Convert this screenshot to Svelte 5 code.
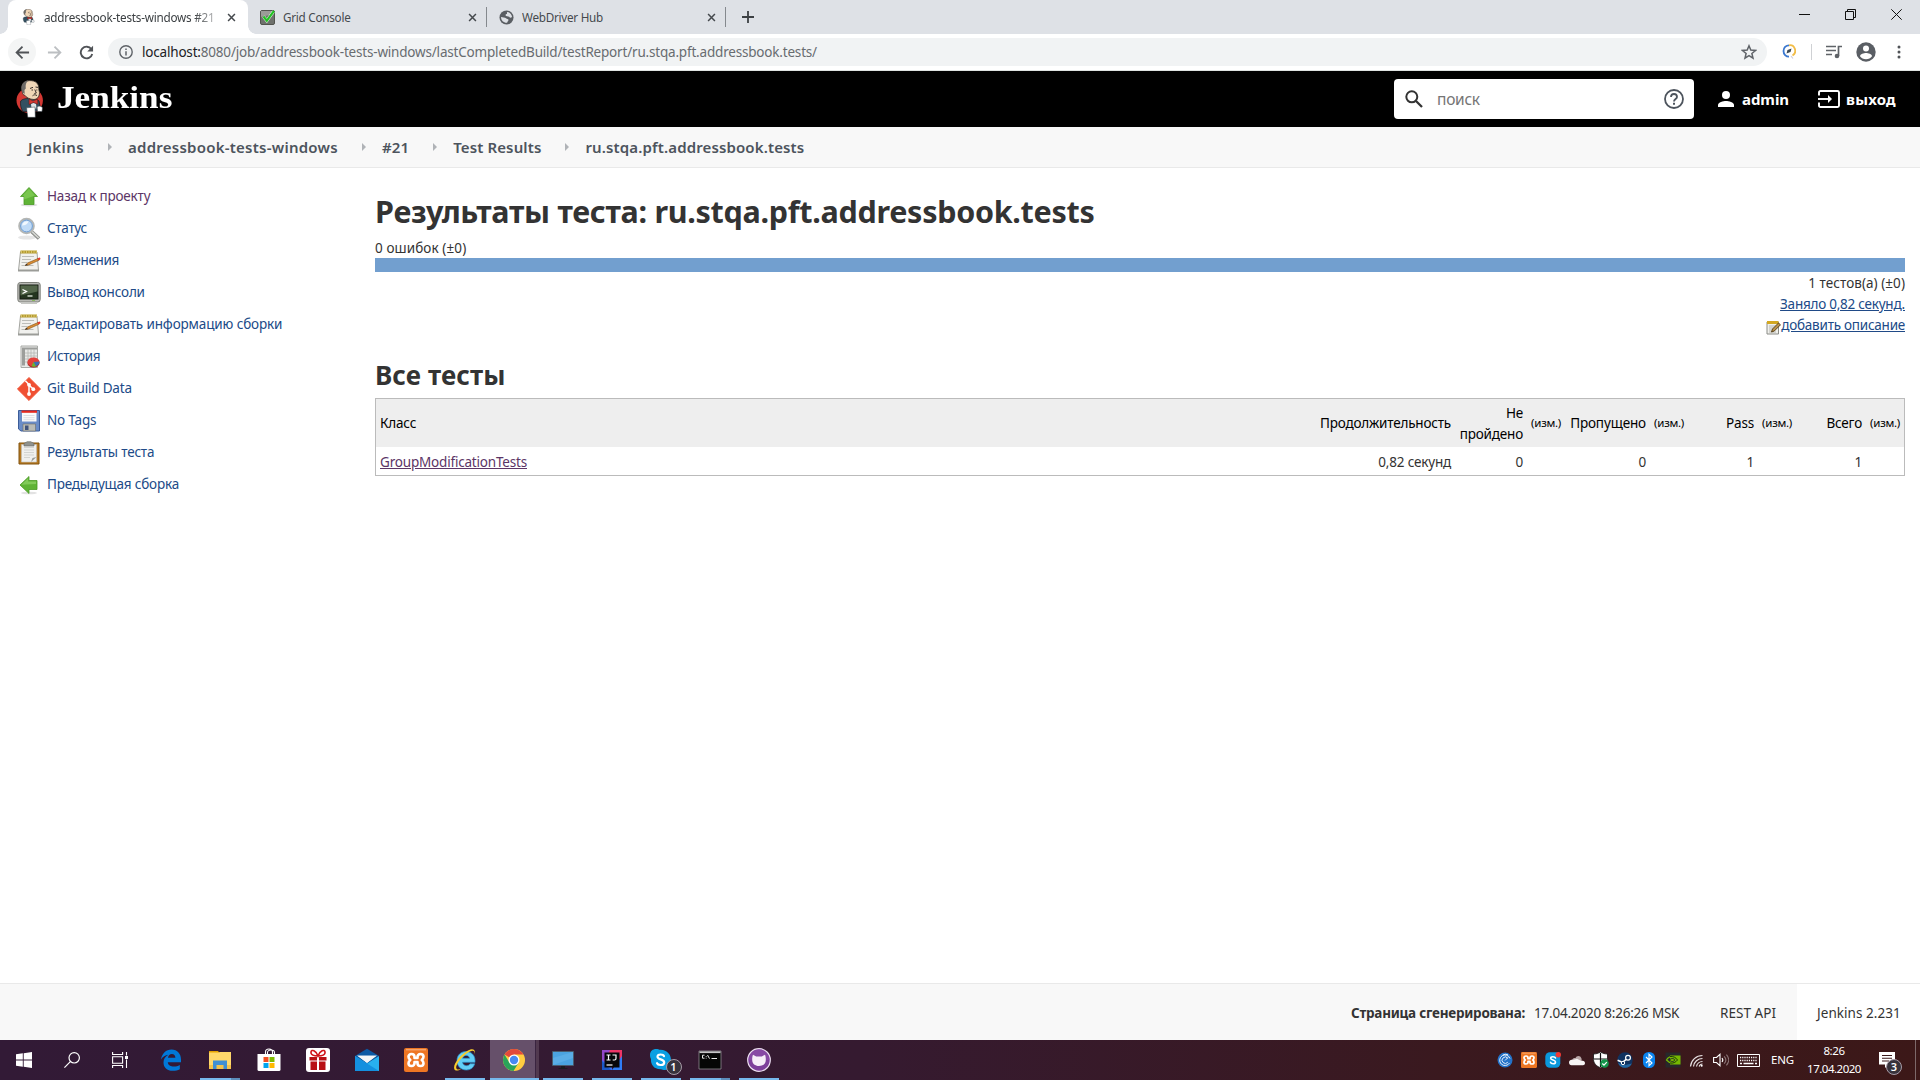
<script>
  const tasks = [
    { icon: 'up', label: 'Назад к проекту', visited: true },
    { icon: 'search', label: 'Статус', ls: 't2' },
    { icon: 'notepad', label: 'Изменения', ls: 't2' },
    { icon: 'terminal', label: 'Вывод консоли' },
    { icon: 'notepad', label: 'Редактировать информацию сборки', ls: 't0' },
    { icon: 'graph', label: 'История', ls: 't2' },
    { icon: 'git', label: 'Git Build Data' },
    { icon: 'floppy', label: 'No Tags' },
    { icon: 'clipboard', label: 'Результаты теста' },
    { icon: 'prev', label: 'Предыдущая сборка' }
  ];
  const crumbs = ['Jenkins', 'addressbook-tests-windows', '#21', 'Test Results', 'ru.stqa.pft.addressbook.tests'];
  const apps = [
    { id: 'edge' },
    { id: 'folder', open: true, multi: true },
    { id: 'store' },
    { id: 'gift' },
    { id: 'mail' },
    { id: 'xampp' },
    { id: 'ie', open: true },
    { id: 'chrome', active: true },
    { id: 'monitor', open: true },
    { id: 'idea', open: true },
    { id: 'skype', open: true },
    { id: 'cmd', open: true, multi: true },
    { id: 'github', open: true }
  ];
  const tray = ['citrix', 'xampp', 'skype', 'cloud', 'shield', 'steam', 'bluetooth', 'nvidia', 'wifi', 'volume'];
</script>

{#snippet butler()}
  <path d="M4.700 21c1.500-2 5-2.500 8-2.500 4 0 9 .5 10.300 2.500l1.500 8-5 2.500H7c-2-2.500-3-7-2.300-10.500z" fill="#335061" stroke="#141c22" stroke-width=".7" />
  <path d="M6.500 12.500C4 6 7 .8 13.500.6c6.500-.2 9.500 3.400 9.300 8 0 2 1 3.400.6 5.400-.3 3-2.400 5.500-5.400 5.500-4 0-8-2-9.500-4.500-1.200 0-2-1-2-2.500z" fill="#f0d6b7" stroke="#2b2522" stroke-width=".8" />
  <path d="M6.500 12.500C3.800 6 7 .8 12.500.6 10 2.500 9.300 5 9.800 8.500L8.500 10l.2 4z" fill="#6d6a67" />
  <path d="M14 8.500l3-1.200M19.500 7l2.500.4M15.500 10h1.500M20.300 10h1M16.500 15.800c1.500-1.300 3-1.300 4.500-.2M18.800 9.500l1.500 3.500-2 .5" stroke="#3a302b" stroke-width="1" fill="none" />
  <path d="M13 19l4 2 4.500-2 .3 5.200-4.300-1.600-4.500 1.800z" fill="#d33833" stroke="#6d120e" stroke-width=".5" />
  <path d="M15 24l2.500-1 2.500 1 .5 4.500h-5z" fill="#dfe5e8" />
  <path d="M10.500 27.800l8.500-.8.3 10.300h-7.500z" fill="#fff" stroke="#39424a" stroke-width=".5" />
  <path d="M21 27c2-1.500 4-1 5.500.8L26 31.500h-4.500z" fill="#fff" stroke="#39424a" stroke-width=".6" />
{/snippet}

{#snippet closeX()}
  <svg class="x" viewBox="0 0 10 10"><path d="M1.200 1.200l7.600 7.600M8.800 1.200L1.200 8.800" stroke="#45494d" stroke-width="1.700" /></svg>
{/snippet}

{#snippet taskIcon(name)}
  <svg class="ticon" viewBox="0 0 24 24">
    {#if name === 'up'}
      <ellipse cx="12" cy="20" rx="8.500" ry="1.500" fill="#ddd" />
      <path d="M12 2.500L20.500 11.500H17V19.500H7V11.500H3.500z" fill="#5fb336" stroke="#4a9a24" stroke-width=".8" />
      <path d="M12 3.800L18 10.500l-11 4V10.700H5.600z" fill="#8bd25f" opacity=".6" />
    {:else if name === 'prev'}
      <ellipse cx="12" cy="20" rx="8" ry="1.300" fill="#e2e2e2" />
      <path d="M3 12L12 3.500V7.500H20V16.500H12V20.500z" fill="#5fb336" stroke="#4a9a24" stroke-width=".8" />
      <path d="M4.300 11.800L11.200 5.200V8.500H19V11z" fill="#9ad873" opacity=".6" />
    {:else if name === 'search'}
      <ellipse cx="10" cy="20.500" rx="9" ry="2" fill="#e6e6e6" />
      <path d="M14.500 14.500l7.500 7" stroke="#8b8d8a" stroke-width="3.600" />
      <path d="M15 14.700l6.700 6.300" stroke="#d5d7d3" stroke-width="1.600" />
      <circle cx="9.500" cy="9" r="7.300" fill="#c0dbf7" stroke="#b4b6b4" stroke-width="2" />
      <circle cx="9.500" cy="9" r="5.900" fill="none" stroke="#6d9bd0" stroke-width="1" />
      <path d="M5 8.500c.5-3 3-4.500 6-4.200 1 1-2 4.500-6 4.200z" fill="#f2f8fe" />
    {:else if name === 'notepad'}
      <path d="M1.500 21.500L3.500 3H20l1.500 18.500z" fill="#f1f1ee" stroke="#a3a49f" stroke-width="1" />
      <path d="M1 20.500h21v2H1z" fill="#9b9c98" />
      <path d="M3.500 1.500h16.500v3H3.300z" fill="#b59b2f" />
      <path d="M4.500 1v3M7 1v3M9.500 1v3M12 1v3M14.500 1v3M17 1v3M19.300 1v3" stroke="#e5d588" stroke-width=".7" />
      <path d="M5 7.500h12M5 10.500h9M4.500 13.500h6M4.500 16.500h12" stroke="#bcbdb9" stroke-width="1" />
      <path d="M8 16.500l3-2.700L21 9.500l.8 1.800-10.300 4.700z" fill="#dc8f35" stroke="#7c4d16" stroke-width=".6" />
      <path d="M8 16.500l1.700-1.700 1.100 1.400z" fill="#333" />
      <path d="M20.500 9.500l1.800-.9c1.200 0 1.500 1.500.6 2.100l-1.500.8z" fill="#e23b2e" />
    {:else if name === 'terminal'}
      <rect x=".8" y="1.500" width="22.400" height="19.500" rx="2.500" fill="#b9bab5" stroke="#7f817b" />
      <path d="M4 21h16v2H4z" fill="#c6c7c3" />
      <rect x="3" y="4" width="18" height="14" fill="#24351f" stroke="#151b12" />
      <path d="M3.500 4.500h17v6l-17 4z" fill="#53664a" />
      <path d="M5.500 8.500l4 2-4 2" stroke="#fff" stroke-width="1.300" fill="none" />
      <path d="M10.500 15h5" stroke="#e9f0e5" stroke-width="1.300" />
      <path d="M15 19.500h3" stroke="#8ab95f" />
    {:else if name === 'graph'}
      <path d="M4 1h16.500v21.500H4z" fill="#e8e9e7" stroke="#a8aaa6" />
      <path d="M5 2.500h3v18H5zM8 2.500h12v2H8z" fill="#9c9e9b" />
      <path d="M11 4v17M14 4v17M17 4v17M8 8h12M8 11h12M8 14h12M8 17h12" stroke="#b4b6b3" stroke-width=".8" />
      <ellipse cx="16.500" cy="18" rx="6" ry="4.600" fill="#a31d1d" />
      <ellipse cx="16.500" cy="17" rx="6" ry="4.500" fill="#e3413b" />
      <path d="M16.500 17l6-.5c.2 2.500-1.500 4-4 4.800z" fill="#3c6fb3" />
      <path d="M16.500 17l2.500 4.400c-1.500.4-3.500.3-4.500-.2z" fill="#6cb52d" />
    {:else if name === 'git'}
      <path d="M12 .4L23.600 12 12 23.600.4 12z" fill="#f05033" stroke="#f05033" stroke-width=".8" stroke-linejoin="round" />
      <path d="M8.300 3.700L12 7.500V17M12 8l4.300 4.300" stroke="#fff" stroke-width="1.500" fill="none" />
      <circle cx="12" cy="7.800" r="1.900" fill="#fff" /><circle cx="12" cy="17" r="1.900" fill="#fff" /><circle cx="16.300" cy="12.200" r="1.900" fill="#fff" />
    {:else if name === 'floppy'}
      <path d="M1.500 1.500h21v20.500H4l-2.500-2z" fill="#6a8cc7" stroke="#3b5c99" />
      <path d="M5 2h14.500v10.500H5z" fill="#fafafa" />
      <path d="M4.500 1.500h15.500v2.300H4.500z" fill="#e5281e" />
      <path d="M6.500 6.500h11M6.500 8.700h11M6.500 10.700h11" stroke="#d4d6dd" stroke-width=".8" />
      <path d="M6 15h12.500v7H6z" fill="#b9bbb6" stroke="#6b6d6a" stroke-width=".6" />
      <path d="M8 16.500h3.500V21H8z" fill="#40527a" />
    {:else if name === 'clipboard'}
      <path d="M2 2h20v21H2z" fill="#b77a23" stroke="#81530f" />
      <path d="M4.500 3.500h15V21h-15z" fill="#f0f0ee" stroke="#c0c1bd" stroke-width=".6" />
      <path d="M7 6.500h10M7 9h10M7 11.500h10M7 14h10M7 16.500h6" stroke="#d3d4d1" stroke-width="1" />
      <path d="M14 21l1.500-4 4-1z" fill="#989a96" />
      <path d="M7 3c0-1.500 2-1 3-2.300h4C15 2 17 1.500 17 3v2H7z" fill="#90928e" stroke="#676965" stroke-width=".6" />
    {/if}
  </svg>
{/snippet}

{#snippet xamppMark()}
  <rect width="24" height="24" rx="2" fill="#ee7623" />
  <path d="M2 1.800h20" stroke="#fbb98a" stroke-width="1" />
  <path d="M7.500 6C5.500 6 4.500 7.200 4.500 8.800c0 1.500.8 2.400 1.800 3.200-1 .8-1.800 1.700-1.800 3.200 0 1.600 1 2.800 3 2.800s3-1.200 3-2.800V14h3v1.200c0 1.600 1 2.800 3 2.800s3-1.200 3-2.800c0-1.500-.8-2.400-1.800-3.200 1-.8 1.800-1.700 1.800-3.200 0-1.600-1-2.800-3-2.800s-3 1.200-3 2.800V10h-3V8.800c0-1.600-1-2.800-3-2.800z" fill="none" stroke="#fff" stroke-width="2.600" stroke-linejoin="round" />
{/snippet}

{#snippet appIcon(id)}
  <svg class="app-svg" viewBox="0 0 24 24">
    {#if id === 'edge'}
      <path d="M2 11.500C3 5.500 7 1.500 12.500 1.500 18.500 1.500 22 6 22 11.500v2.800H8.800c.2 3 3 4.300 6 4.300 2.200 0 4.200-.5 6-1.600v4.200c-2 1.100-4.400 1.600-7 1.600C8 22.800 4.500 19.500 4.500 14.500c0-3.500 1.800-6 4.800-7.700C6.200 7 3.800 8.800 2 11.500zM9 9.800h7.400C16.400 7.500 15 6 12.900 6S9.300 7.500 9 9.800z" fill="#0078d7" />
    {:else if id === 'folder'}
      <path d="M1 3h9l1.500 2H1z" fill="#e5a200" /><path d="M1 4.500h9.500l1.500-.5h11v17H1z" fill="#ffd86b" />
      <path d="M1 17h22v4H1z" fill="#f3c24a" /><path d="M5 12.500h14V21h-3.500v-4h-7v4H5z" fill="#3f8fd2" />
    {:else if id === 'store'}
      <path d="M8.500 6.500V4c0-4 7-4 7 0v2.500M10.500 6.500V4.500c0-3.500 7-3 7 0v2" fill="none" stroke="#fff" stroke-width="1.100" />
      <path d="M.5 6h23v15.500a1.500 1.500 0 0 1-1.500 1.500H2A1.500 1.500 0 0 1 .5 21.500z" fill="#fff" />
      <path d="M6.500 9h5v5h-5z" fill="#f25022" /><path d="M12.500 9h5v5h-5z" fill="#7fba00" /><path d="M6.500 15h5v5h-5z" fill="#00a4ef" /><path d="M12.500 15h5v5h-5z" fill="#ffb900" />
    {:else if id === 'gift'}
      <rect width="24" height="24" rx="3" fill="#fff" />
      <path d="M3.500 9h7.500v3.500H3.500zM13 9h7.500v3.500H13zM4.500 13.500H11V22H4.500zM13 13.500h6.500V22H13z" fill="#b80f14" />
      <path d="M12 8C8 8 4.500 7 5 4s5-1.500 7 4c2-5.500 6.500-7 7-4s-3 4-7 4z" fill="none" stroke="#d0161b" stroke-width="1.600" />
    {:else if id === 'mail'}
      <path d="M0 8L12 .7 24 8l-12 8z" fill="#0c59a4" /><path d="M2 7.500h20L12 15z" fill="#e8eef4" />
      <path d="M0 8l12 7.500L24 8v15H0z" fill="#28b0ef" /><path d="M0 8l24 15H0z" fill="#1490df" /><path d="M3 8h18l-9 6.800z" fill="#f3f5f7" />
    {:else if id === 'xampp'}
      {@render xamppMark()}
    {:else if id === 'ie'}
      <path d="M4 12.500C4 7 8 3.500 13 3.500s9 3.500 9 9v1.800H9.500c.4 2.200 2 3.400 4 3.400 1.600 0 2.800-.6 3.500-1.900h4.700C20.400 20 17.400 22 13.300 22 8 22 4 18.200 4 12.500zm5.600-2.200h7.100c-.4-1.800-1.700-2.900-3.500-2.900s-3.200 1.100-3.600 2.900z" fill="#62cdf5" stroke="#2a93cf" stroke-width=".7" />
      <path d="M21.500 6.500C22.800 2 20.500-.5 15 2.500 7.500 6.500-1 17 1.500 21.500c1 1.800 4 1.200 6.500-.5C3 22.500 2 20 4.500 15.500 8 9.500 14.500 4 18.500 3c2.500-.6 3.300.8 3 3.500z" fill="#f8cb2b" />
    {:else if id === 'chrome'}
      <circle cx="12" cy="12" r="11" fill="#ffcd40" />
      <path d="M12 12L2.500 6.500A11 11 0 0 1 21.500 6.500H12z" fill="#e2493b" />
      <path d="M2.500 6.500A11 11 0 0 0 11.500 23L16.800 14.500 12 12 7.500 14.800z" fill="#2aa45a" />
      <circle cx="12" cy="12" r="5.500" fill="#fff" /><circle cx="12" cy="12" r="4.200" fill="#4789f2" />
    {:else if id === 'monitor'}
      <path d="M1.500 3.500h21v14h-21z" fill="#4ba3e0" stroke="#4b5a66" stroke-width=".8" /><path d="M2 10L22 4v6l-20 7z" fill="#5aade6" />
      <path d="M10 18h4v2h2.500v1h-9v-1H10z" fill="#1c1c1f" />
    {:else if id === 'idea'}
      <path d="M2 2h10v20H2z" fill="#3a6df0" /><path d="M2 13l9 9H2z" fill="#1b58c8" /><path d="M2 2h20v9L12 14 2 8z" fill="#ef3566" /><path d="M22 8v14H12z" fill="#2f7df6" /><path d="M2 2h8L5 14l-3-2z" fill="#9247c9" />
      <rect x="4.500" y="4.500" width="15" height="15" fill="#07070a" />
      <path d="M6.500 7h4M6.500 12h4M8.500 7v5M12.500 7h3.500v3.500q0 1.500-1.500 1.500h-1.800" stroke="#fff" stroke-width="1.200" fill="none" /><path d="M6.500 17h6" stroke="#fff" stroke-width="1.200" />
    {:else if id === 'skype'}
      <path d="M1 7c0-4 3-6 6-6 2 0 3 .7 4 .8C18 1.500 22.500 7 22 13c1.200 3-1 9-6 9-2 0-3-.8-4-.8C5 21.500 1.500 16.500 2 11 1.300 9.500 1 8.500 1 7z" fill="#0a9fe2" />
      <path d="M15 8.200C14.200 6.200 8.500 5.500 8.500 8.800c0 3 6.700 2.200 6.700 5.600 0 3.500-6.300 3.200-7.200.8" stroke="#fff" stroke-width="2.200" fill="none" stroke-linecap="round" />
    {:else if id === 'cmd'}
      <path d="M1 3h22v18H1z" fill="#060606" stroke="#8e8a8f" stroke-width=".8" /><path d="M1.500 3.300h21v1.800h-21z" fill="#c8c6c9" />
      <path d="M6.500 7.200H4.500v3h2M8.200 8v.8M8.200 9.800v.7M9.500 7l2 3.600M13.500 10.500h5.500" stroke="#e8e8e8" stroke-width="1" fill="none" />
    {:else if id === 'github'}
      <circle cx="12" cy="12" r="11.300" fill="#7d3f9a" stroke="#ecdff0" stroke-width="1.200" /><path d="M1.500 12a10.500 10.500 0 0 1 21 0z" fill="#9256ad" opacity=".5" />
      <path d="M6 6.800l3.200 1.600h5.600L18 6.800c.9 2.200.8 3.700.8 5.200 0 3.800-2.800 6-6.800 6s-6.800-2.200-6.800-6c0-1.500-.1-3 .8-5.200z" fill="#f6eef8" />
    {/if}
  </svg>
{/snippet}

{#snippet trayIcon(id)}
  <svg class="tray-svg" viewBox="0 0 16 16">
    {#if id === 'citrix'}
      <circle cx="8" cy="8" r="7.500" fill="#2372c8" /><path d="M13 6.500A5.300 5.300 0 1 0 12.500 11M10.800 6.200A3.200 3.200 0 1 0 10.800 10.200M8 8.500l3-3M6 3A5.500 5.500 0 0 1 11 2.800" stroke="#e6f0fb" stroke-width="1" fill="none" />
    {:else if id === 'xampp'}
      <g transform="scale(.667)">{@render xamppMark()}</g>
    {:else if id === 'skype'}
      <rect x=".3" y=".3" width="15" height="15.400" rx="4.500" fill="#0a98dc" /><path d="M10.500 6C10 4.500 5.700 4.200 5.700 6.300c0 2 4.800 1.500 4.800 3.700 0 2.500-4.500 2.200-5 .3" stroke="#fff" stroke-width="1.600" fill="none" stroke-linecap="round" /><circle cx="13.300" cy="2.800" r="2.700" fill="#f03a35" />
    {:else if id === 'cloud'}
      <path d="M3 10.500c-1-3 1.500-5 3.500-4.500 1-2.700 5-2.800 6 .5l.5 4z" fill="#b9a7a8" /><path d="M0 10.500c0-2 2-3 3.500-2.500L8 6.800 12.500 9c2-.8 3.500.5 3.500 2.200 0 1.300-1 2-2 2H2.500C1 13.200 0 12 0 10.500z" fill="#f6f4f4" />
    {:else if id === 'shield'}
      <path d="M7.500 0c2 1.300 4.500 2 7 2v5.500c0 4-3.500 7-7 8.300-3.500-1.300-7-4.300-7-8.300V2c2.500 0 5-.7 7-2z" fill="#fff" stroke="#111" stroke-width=".8" /><path d="M7.500 1v14M1 7h13" stroke="#111" stroke-width="1.200" /><circle cx="11.500" cy="11.500" r="4.300" fill="#15964b" /><path d="M9.300 11.500l1.700 1.700 2.800-3" stroke="#fff" stroke-width="1.200" fill="none" />
    {:else if id === 'steam'}
      <circle cx="8" cy="8" r="7.700" fill="#10325f" /><path d="M1 11A7.700 7.700 0 0 0 15 11.500L8 13z" fill="#2366a0" /><circle cx="11" cy="5.800" r="2.400" fill="none" stroke="#fff" stroke-width="1.200" /><path d="M.6 8.200l5 2.200 3.600-3" stroke="#fff" stroke-width="1.600" fill="none" /><circle cx="6" cy="11" r="1.700" fill="#10325f" stroke="#fff" stroke-width="1" />
    {:else if id === 'bluetooth'}
      <rect x="2" y="0" width="12" height="16" rx="5.500" fill="#0a84f0" /><path d="M5 5l6 6-3 2.700V2.300L11 5l-6 6" stroke="#fff" stroke-width="1.100" fill="none" />
    {:else if id === 'nvidia'}
      <path d="M.5.500h15v15H.5z" fill="#27282b" /><path d="M5 3.500h10.500v9H5z" fill="#76b900" /><path d="M1.500 8c2.500-4.500 8-4.500 11 0-3 4-7.500 4-11 0z" fill="none" stroke="#76b900" stroke-width="1.200" /><path d="M5 4.500c3-.5 6 1 7.500 3.500C10.500 10.500 8 11.500 5 11" fill="none" stroke="#1e3a08" stroke-width="1" /><path d="M4.500 8c1.500-2 4-2 5.500 0-1.500 2-4 2-5.500 0z" fill="none" stroke="#27282b" stroke-width="1" />
    {:else if id === 'wifi'}
      <path d="M1.500 14.500A12 12 0 0 1 13.500 3.500M4.500 14.500a9 9 0 0 1 9-8M7.500 14.500a6 6 0 0 1 6-5M10.200 14.500a3.400 3.400 0 0 1 3.300-2.500" stroke="#e9e3e4" stroke-width="1.200" fill="none" /><circle cx="12.700" cy="13.800" r="1" fill="#fff" />
    {:else if id === 'volume'}
      <path d="M.6 5.500h2.900L7 2.300v11.400L3.500 10.500H.6z" stroke="#fff" stroke-width="1.100" fill="none" /><path d="M9 6c1 1.200 1 2.800 0 4" stroke="#fff" stroke-width="1.100" fill="none" /><path d="M11.200 4.300c2 2.200 2 5.200 0 7.400M13.400 2.700c3 3.200 3 7.400 0 10.600" stroke="#8c7577" stroke-width="1.100" fill="none" />
    {/if}
  </svg>
{/snippet}

<div class="screen">
  <div class="tabstrip">
    <div class="tab active">
      <svg class="fav" viewBox="0 0 28 38" preserveAspectRatio="none">{@render butler()}</svg>
      <span class="title">addressbook-tests-windows #21</span>
      {@render closeX()}
    </div>
    <div class="tab">
      <svg class="fav" viewBox="0 0 16 16"><rect x=".5" y="1.500" width="14" height="14" rx="1.500" fill="#6f716d" stroke="#52544f" /><path d="M1 8l13-3v-3H1z" fill="#9a9c97" /><path d="M3.500 7.500l3.300 4.200L13.500 2.500" stroke="#e8f5e8" stroke-width="3" fill="none" /><path d="M3.500 7.500l3.300 4.200L14 1.800" stroke="#22c024" stroke-width="2.200" fill="none" /></svg>
      <span class="title">Grid Console</span>
      {@render closeX()}
    </div>
    <div class="tab">
      <svg class="fav globe" viewBox="0 0 16 16"><circle cx="8" cy="8" r="7.500" fill="#5a5e63" /><path d="M8.500 2.200c3 0 5.200 2.300 5.400 5.300-1.500 1.300-2.400.8-3-.4L7.500 6.500c-1-1-.5-2.300 1-2.300zM2.200 7.500l4.300.7c1.500.4 2 1.500 3.500 1.800.5 1.600-1.200 2-1.300 3.700C5 14 2 11 2.200 7.500z" fill="#dee1e6" /></svg>
      <span class="title">WebDriver Hub</span>
      {@render closeX()}
    </div>
    <svg class="plus" viewBox="0 0 12 12"><path d="M6 0v12M0 6h12" stroke="#3c4043" stroke-width="1.800" /></svg>
    <div class="winctl">
      <svg viewBox="0 0 11 11"><path d="M0 5.500h11" stroke="#111" /></svg>
      <svg viewBox="0 0 11 11"><path d="M.5 2.500h8v8h-8zM2.500 2.500v-2h8v8h-2" stroke="#111" fill="none" /></svg>
      <svg viewBox="0 0 11 11"><path d="M.3.300l10.400 10.400M10.700.300L.3 10.700" stroke="#111" /></svg>
    </div>
  </div>

  <div class="toolbar">
    <span class="nav back"><svg viewBox="0 0 16 16"><path d="M15 8H2M8 1.700L1.700 8 8 14.300" stroke="#505357" stroke-width="1.900" fill="none" /></svg></span>
    <span class="nav"><svg viewBox="0 0 16 16"><path d="M1 8h13M8 1.700L14.300 8 8 14.300" stroke="#bcbfc2" stroke-width="1.900" fill="none" /></svg></span>
    <span class="nav"><svg viewBox="0 0 16 16"><path d="M13.200 4.500A6.200 6.200 0 1 0 14.100 9.500" stroke="#505357" stroke-width="2" fill="none" /><path d="M15 .8v6.200H8.800z" fill="#505357" /></svg></span>
    <div class="omnibox">
      <svg class="info" viewBox="0 0 14 14"><circle cx="7" cy="7" r="6.200" fill="none" stroke="#5f6368" stroke-width="1.400" /><path d="M7 6.200v4.300M7 3.400v1.500" stroke="#5f6368" stroke-width="1.500" /></svg>
      <span class="url"><b>localhost:</b>8080/job/addressbook-tests-windows/lastCompletedBuild/testReport/ru.stqa.pft.addressbook.tests/</span>
      <svg class="star" viewBox="0 0 16 16"><path d="M8 1.800l1.800 4.300 4.700.4-3.600 3 1.100 4.600L8 11.700l-4 2.400 1.100-4.600-3.600-3 4.700-.4z" fill="none" stroke="#5f6368" stroke-width="1.500" /></svg>
    </div>
    <svg class="ext" viewBox="0 0 14 16"><path d="M7 1.300A5.300 5.500 0 0 0 7 12.700" stroke="#3b78cf" stroke-width="1.800" fill="none" /><path d="M7 1.300a5.300 5.500 0 0 1 3.500 10.200" stroke="#f2bd48" stroke-width="1.800" fill="none" /><path d="M4.500 9.500l1-3.500 4-1.500-1 3.500z" fill="#3c4a56" /><path d="M9 12l2 2.500" stroke="#ccd" stroke-width="1.200" /></svg>
    <span class="vsep"></span>
    <svg class="music" viewBox="0 0 16 14"><path d="M0 1.500h10M0 5.500h10M0 9.500h6" stroke="#5f6368" stroke-width="1.700" /><path d="M12.500 11V1.500H16" stroke="#5f6368" stroke-width="1.700" fill="none" /><circle cx="11" cy="11" r="2.300" fill="#5f6368" /></svg>
    <svg class="avatar" viewBox="0 0 20 20"><circle cx="10" cy="10" r="9.700" fill="#5a5e64" /><circle cx="10" cy="6.600" r="3" fill="#fff" /><path d="M4 14.200c0-2.300 4-3.300 6-3.300s6 1 6 3.300c-1.300 1.900-3.500 3-6 3s-4.700-1.100-6-3z" fill="#fff" /></svg>
    <svg class="dots" viewBox="0 0 4 14"><circle cx="2" cy="2" r="1.500" fill="#505357" /><circle cx="2" cy="7" r="1.500" fill="#505357" /><circle cx="2" cy="12" r="1.500" fill="#505357" /></svg>
  </div>

  <header class="jheader">
    <svg class="logo" viewBox="0 0 28 38"><ellipse cx="13.700" cy="20.500" rx="13.200" ry="12.800" fill="#d33833" />{@render butler()}</svg>
    <span class="brand">Jenkins</span>
    <div class="search">
      <svg class="mag" viewBox="0 0 18 18"><circle cx="6.800" cy="6.800" r="5.500" fill="none" stroke="#333" stroke-width="2" /><path d="M11 11l6 6" stroke="#333" stroke-width="2.300" /></svg>
      <span class="ph">поиск</span>
      <svg class="help" viewBox="0 0 20 20"><circle cx="10" cy="10" r="9" fill="none" stroke="#4d545d" stroke-width="1.800" /><path d="M7 8c0-4 6-4 6 0 0 2-3 2.200-3 4.500" fill="none" stroke="#4d545d" stroke-width="1.800" /><path d="M10 13.800v2" stroke="#4d545d" stroke-width="2" /></svg>
    </div>
    <svg class="person" viewBox="0 0 16 16"><circle cx="8" cy="4" r="4" fill="#fff" /><path d="M0 16v-2c0-2.700 5.300-4 8-4s8 1.300 8 4v2z" fill="#fff" /></svg>
    <span class="user">admin</span>
    <svg class="exit" viewBox="0 0 22 18"><path d="M1 5.500V2.500Q1 1 2.500 1h17Q21 1 21 2.500v13q0 1.500-1.500 1.500h-17Q1 17 1 15.500v-3" fill="none" stroke="#fff" stroke-width="1.900" /><path d="M0 9h12" stroke="#fff" stroke-width="1.900" /><path d="M10 5l4 4-4 4z" fill="#fff" /></svg>
    <span class="user logout">выход</span>
  </header>

  <nav class="crumbs">
    {#each crumbs as c, i}
      {#if i > 0}<svg class="sep" viewBox="0 0 4 8"><path d="M0 0l4 4-4 4z" fill="#b0b3b7" /></svg>{/if}
      <span class={['crumb', { wide: i === 0, mid: i === 1 }]}>{c}</span>
    {/each}
  </nav>

  <div class="body">
    <aside>
      {#each tasks as t}
        <div class="task">{@render taskIcon(t.icon)}<a href="#top" class={[t.ls, { visited: t.visited }]}>{t.label}</a></div>
      {/each}
    </aside>
    <main>
      <h1>Результаты теста: ru.stqa.pft.addressbook.tests</h1>
      <div class="fails">0 ошибок (±0)</div>
      <div class="bar"></div>
      <div class="stats">
        <div class="count">1 тестов(а) (±0)</div>
        <div class="took"><a href="#top">Заняло 0,82 секунд.</a></div>
        <div class="desc">
          <svg viewBox="0 0 15 15"><path d="M1 2h11.500v12H1z" fill="#f0f0ec" stroke="#8b8c87" /><path d="M1 1h11.500v3H1z" fill="#d3a821" /><path d="M3 6h7M3 8h5M3 10h4M3 12h7" stroke="#b5b6b2" /><path d="M5.500 12l1-3 6-6 2 1.800-6.200 6.200z" fill="#ba934d" stroke="#4e3811" stroke-width=".9" /></svg><a href="#top">добавить описание</a>
        </div>
      </div>
      <h2>Все тесты</h2>
      <div class="table">
        <div class="row head">
          <span class="l">Класс</span><span>Продолжительность</span><span class="nf">Не пройдено</span><span class="d">(изм.)</span><span class="t0">Пропущено</span><span class="d">(изм.)</span><span>Pass</span><span class="d">(изм.)</span><span>Всего</span><span class="d">(изм.)</span>
        </div>
        <div class="row data">
          <span class="l"><a href="#top" class="visited">GroupModificationTests</a></span><span>0,82 секунд</span><span>0</span><span></span><span>0</span><span></span><span>1</span><span></span><span>1</span><span></span>
        </div>
      </div>
    </main>
  </div>

  <footer>
    <span class="gen">Страница сгенерирована:</span>
    <span class="date">17.04.2020 8:26:26 MSK</span>
    <span class="api">REST API</span>
    <span class="ver">Jenkins 2.231</span>
  </footer>

  <div class="taskbar">
    <span class="sys"><svg viewBox="0 0 16 16"><path d="M0 2.300L6.800 1.300v6.300H0zM7.700 1.200L16 0v7.600H7.700zM0 8.500h6.800v6.300L0 13.800zM7.700 8.500H16V16l-8.300-1.200z" fill="#fff" /></svg></span>
    <span class="sys"><svg viewBox="0 0 16 16"><circle cx="10.200" cy="5.800" r="5.200" fill="none" stroke="#fff" stroke-width="1.200" /><path d="M6.300 9.700L.4 15.600" stroke="#fff" stroke-width="1.200" /></svg></span>
    <span class="sys"><svg viewBox="0 0 16 16"><path d="M.6 0v2.500h10V0M.6 16v-2.500h10V16M.6 4.700h10v6.500H.6zM14.500 0v3.500M14.500 7.500V16" stroke="#fff" stroke-width="1.100" fill="none" /><path d="M13 4h3v3h-3z" fill="#fff" /></svg></span>
    <div class="apps">
      {#each apps as a}
        <span class={['app', { open: a.open, active: a.active, multi: a.multi }]}>
          {@render appIcon(a.id)}
          {#if a.id === 'skype'}<span class="badge sk">1</span>{/if}
        </span>
      {/each}
    </div>
    <div class="tray">
      {#each tray as t}<span class="ti">{@render trayIcon(t)}</span>{/each}
      <svg class="kbd" viewBox="0 0 23 13"><path d="M.5.500h22v12H.5z" fill="none" stroke="#fff" /><path d="M3 3.500h17M3 6.500h17" stroke="#fff" stroke-width="1.300" stroke-dasharray="1.200 1" /><path d="M3 9.500h2M6.500 9.500h10M18 9.500h2" stroke="#fff" stroke-width="1.300" /></svg>
      <span class="lang">ENG</span>
      <span class="clock"><span>8:26</span><span class="day">17.04.2020</span></span>
      <span class="notif">
        <svg viewBox="0 0 16 16"><path d="M0 0h16v12.500H9.500L6 16v-3.500H0z" fill="#fff" /><path d="M3 3.500h10M3 6.300h10M3 9h7" stroke="#3b191b" stroke-width="1.100" /></svg>
        <span class="badge nb">3</span>
      </span>
      <span class="edge"></span>
    </div>
  </div>
</div>

<style>
  :global(body) { margin: 0; background: #fff; overflow: hidden; }
  .screen { width: 1920px; height: 1080px; display: flex; flex-direction: column; font: 13.5px 'Noto Sans', 'Open Sans', sans-serif; letter-spacing: -0.19px; color: #333; white-space: nowrap; }
  svg { display: block; flex: none; }
  a { color: #204a87; text-decoration: underline; }
  a.visited { color: #5c3566; }
  .t0 { letter-spacing: -0.13px; }
  .t2 { letter-spacing: -0.3px; }

  .tabstrip { height: 34px; background: #dee1e6; display: flex; align-items: center; padding-left: 8px; }
  .tab { width: 239px; height: 34px; box-sizing: border-box; padding: 0 10px 0 12px; display: flex; align-items: center; position: relative; font-size: 11.7px; letter-spacing: -0.25px; color: #45494d; }
  .tab.active { width: 240px; padding-right: 12px; background: #fff; border-radius: 8px 8px 0 0; color: #3c4043; }
  .tab.active::before, .tab.active::after { content: ''; position: absolute; bottom: 0; width: 8px; height: 8px; }
  .tab.active::before { left: -8px; background: radial-gradient(circle at 0 0, #dee1e6 7.500px, #fff 8px); }
  .tab.active::after { right: -8px; background: radial-gradient(circle at 100% 0, #dee1e6 7.500px, #fff 8px); }
  .tab:not(.active) { background: linear-gradient(#85898e, #85898e) right center / 1px 20px no-repeat; }
  .fav { width: 16px; height: 16px; margin-right: 7px; }
  .active .fav { width: 14px; margin: 0 9px 0 1px; }
  .globe { width: 15px; height: 15px; margin: 0 8px 0 0; }
  .title { flex: 1; overflow: hidden; line-height: 20px; padding-bottom: 1px; }
  .active .title { flex: 0 0 172px; margin-right: auto; letter-spacing: -0.22px; -webkit-mask-image: linear-gradient(90deg, #000 150px, transparent 182px); mask-image: linear-gradient(90deg, #000 150px, transparent 182px); }
  .x { width: 9px; height: 9px; }
  .plus { width: 12px; height: 12px; margin-left: 16px; }
  .winctl { margin-left: auto; display: flex; gap: 35px; padding: 0 18px 6px 0; }
  .winctl svg { width: 11px; height: 11px; }

  .toolbar { height: 36px; border-bottom: 1px solid #dfe3e1; display: flex; align-items: center; padding: 0 0 0 8px; background: #fff; }
  .nav { width: 28px; height: 28px; margin-right: 4px; display: grid; place-items: center; border-radius: 50%; }
  .nav.back { background: #f4f5f5; }
  .nav svg { width: 15px; height: 15px; }
  .omnibox { width: 1659px; height: 28px; border-radius: 14px; background: #f1f3f4; display: flex; align-items: center; margin-left: 4px; margin-right: 15px; box-sizing: border-box; padding: 0 10px 0 11px; }
  .info { width: 14px; height: 14px; margin-right: 9px; }
  .url { flex: 1; font-size: 13.5px; letter-spacing: -0.19px; color: #686c70; }
  .url b { font-weight: 400; color: #202124; }
  .star { width: 16px; height: 16px; }
  .ext { width: 14px; height: 16px; margin-right: 15px; }
  .vsep { width: 1px; height: 16px; background: #cfd1d4; margin-right: 14px; }
  .music { width: 16px; height: 14px; margin-right: 14px; }
  .avatar { width: 20px; height: 20px; margin-right: 21px; }
  .dots { width: 4px; height: 14px; }

  .jheader { height: 56px; background: #000; display: flex; align-items: center; padding-left: 16px; }
  .logo { width: 28px; height: 38px; }
  .brand { width: 102px; margin: -3px 1235px 0 13px; font: 700 31px 'Liberation Serif', serif; letter-spacing: 0; color: #fff; transform: scaleX(1.135); transform-origin: 0 50%; }
  .search { width: 300px; height: 40px; margin-right: 24px; background: #fff; border-radius: 4px; display: flex; align-items: center; box-sizing: border-box; padding: 0 10px 0 11px; }
  .mag { width: 18px; height: 18px; margin-right: 14px; }
  .ph { flex: 1; font-size: 15.5px; letter-spacing: -0.25px; color: #757575; }
  .help { width: 20px; height: 20px; }
  .person { width: 16px; height: 16px; margin-right: 8px; }
  .user { width: 76px; font-size: 15px; font-weight: 700; letter-spacing: -0.07px; color: #fff; }
  .exit { width: 22px; height: 18px; margin-right: 6px; }
  .logout { letter-spacing: 0.2px; width: auto; }

  .crumbs { height: 40px; background: #f8f8f8; border-bottom: 1px solid #e9e9e9; display: flex; align-items: center; padding-left: 28px; font-size: 15px; font-weight: 600; color: #4d545d; }
  .crumb { letter-spacing: 0.13px; }
  .crumb.wide { letter-spacing: 0.43px; }
  .crumb.mid { letter-spacing: 0.24px; }
  .sep { width: 4px; height: 8px; margin: 0 16px 0 24px; }

  .body { flex: 1; display: flex; min-height: 0; }
  aside { width: 375px; padding: 12px 0 0 17px; box-sizing: border-box; }
  .task { height: 32px; display: flex; align-items: center; }
  .task a { text-decoration: none; line-height: 20px; }
  .ticon { width: 24px; height: 24px; margin: 1px 6px 0 0; }
  main { width: 1530px; display: flex; flex-direction: column; }
  h1 { margin: 22px 0 0; height: 42px; line-height: 42px; font-size: 30.5px; font-weight: 700; letter-spacing: -0.29px; }
  .fails { height: 26px; line-height: 32px; letter-spacing: 0.1px; }
  .bar { height: 14px; background: #729fcf; }
  .stats { text-align: right; line-height: 21px; height: 63px; padding-top: 1px; }
  .stats .count { letter-spacing: 0.05px; }
  .took, .desc { letter-spacing: -0.24px; }
  .desc { display: flex; justify-content: flex-end; align-items: center; }
  .desc svg { width: 15px; height: 15px; margin-top: 4px; }
  h2 { margin: 18px 0 0; height: 44px; line-height: 42px; font-size: 26px; font-weight: 700; letter-spacing: 0.1px; }
  .table { border: 1px solid #bbb; }
  .row { display: grid; grid-template-columns: 938px 141px 72px 38px 85px 38px 70px 38px 70px 38px; height: 28px; align-items: center; text-align: right; line-height: 21px; }
  .row span { padding: 0 4px; }
  .row .l { text-align: left; }
  .data { box-sizing: border-box; padding-top: 2px; }
  .head { height: 48px; background: #eee; color: #000; }
  .head span { white-space: normal; }
  .head .nf { padding-top: 2px; }
  .row .d { font-size: 11.500px; letter-spacing: -0.28px; white-space: nowrap; padding-bottom: 1px; }

  footer { height: 56px; border-top: 1px solid #e9e9e9; background: #f8f8f8; display: flex; line-height: 58px; justify-content: flex-end; }
  .gen { font-weight: 700; width: 183px; letter-spacing: -0.25px; }
  .date { width: 186px; letter-spacing: -0.21px; }
  .api { width: 77px; letter-spacing: 0.04px; }
  .ver { width: 103px; background: #fff; padding-left: 20px; letter-spacing: 0.04px; }

  .taskbar { height: 40px; background: linear-gradient(90deg, #321a36, #351a30 45%, #3a191f 75%, #3c1818); display: flex; }
  .sys { width: 48px; display: grid; place-items: center; }
  .sys svg { width: 16px; height: 16px; }
  .apps { display: flex; margin-left: 2.500px; }
  .app { width: 49px; position: relative; display: grid; place-items: center; box-sizing: border-box; }
  .app-svg { width: 24px; height: 24px; }
  .app.open::after { content: ''; position: absolute; left: 4.500px; width: 40px; bottom: 0; height: 2px; background: #76b9ed; }
  .app.open.multi::after { background: linear-gradient(90deg, #76b9ed 31px, #5c8dbb 31px); }
  .app.active { background: linear-gradient(90deg, #66506a 45px, #3a2440 45px, #3a2440 46px, #51394f 46px); box-shadow: inset 0 -2px #76b9ed; }
  .badge { position: absolute; box-sizing: border-box; border: 1px solid #a79ca8; border-radius: 50%; background: #38333c; color: #fff; font-size: 11px; text-align: center; font-weight: 600; letter-spacing: 0; width: 16px; height: 16px; line-height: 14px; }
  .sk { left: 29px; top: 19px; }
  .tray { margin-left: auto; display: flex; align-items: center; color: #fff; font-size: 11.500px; }
  .ti { width: 24px; display: grid; place-items: center; }
  .tray-svg { width: 16px; height: 16px; }
  .kbd { width: 23px; height: 13px; margin-left: 4px; }
  .lang { width: 23px; margin-left: 11px; padding-bottom: 1px; }
  .clock { width: 80px; display: flex; flex-direction: column; align-items: center; line-height: 18.500px; letter-spacing: -0.4px; }
  .day { letter-spacing: -0.5px; }
  .notif { position: relative; width: 35px; margin-left: 5px; margin-right: 1px; }
  .notif svg { width: 16px; height: 16px; }
  .nb { left: 7px; top: 7px; }
  .edge { width: 1px; height: 40px; background: #7d6869; margin-right: 4px; }
</style>
